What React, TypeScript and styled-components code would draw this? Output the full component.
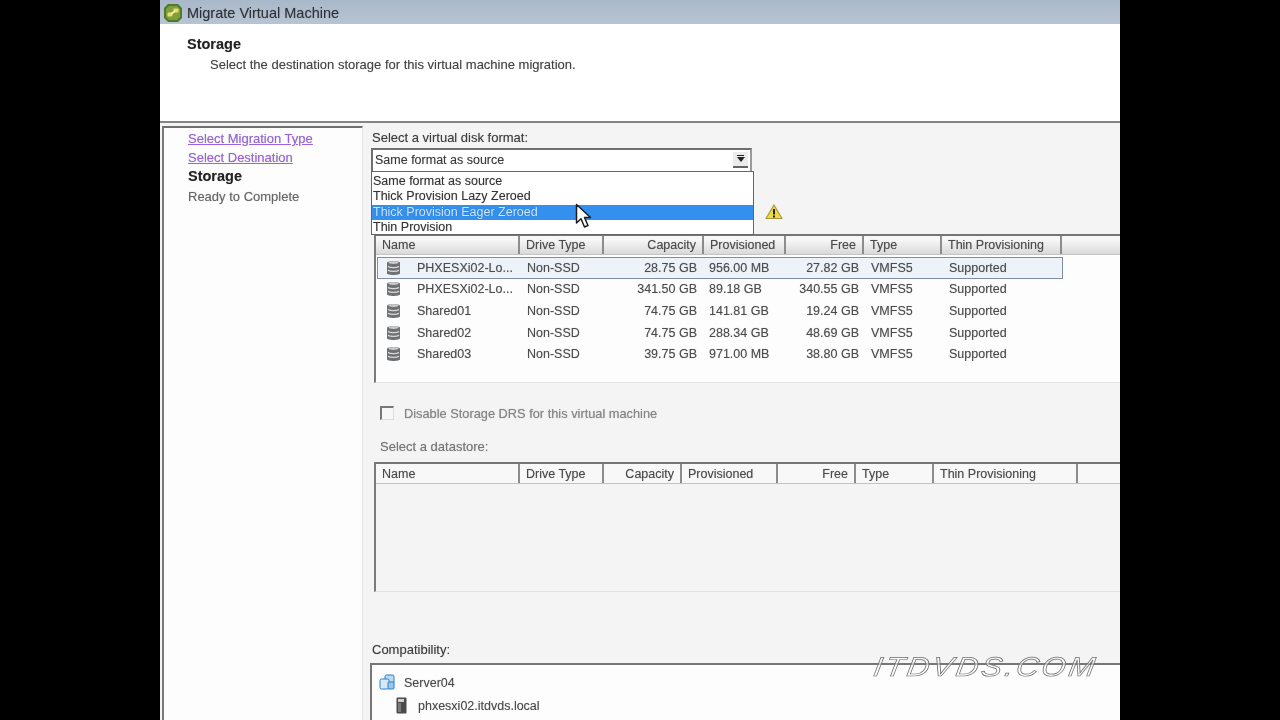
import React from "react";
import styled, { createGlobalStyle } from "styled-components";

const GlobalStyle = createGlobalStyle`
  html, body {
    margin: 0;
    padding: 0;
    height: 720px;
    overflow: hidden;
    background: #000;
  }
  * { box-sizing: border-box; }
`;

const Page = styled.div`
  width: 1280px;
  height: 720px;
  background: #000;
  display: flex;
  justify-content: center;
  overflow: hidden;
`;

const Win = styled.div`
  position: relative;
  width: 960px;
  height: 720px;
  overflow: hidden;
  display: flex;
  flex-direction: column;
  background: #fdfdfd;
  color: #3a3a3a;
  font-family: "Liberation Sans", Arial, sans-serif;
  font-size: 12.5px;
  text-shadow: 0 0 1px rgba(0, 0, 0, 0.3);
  filter: blur(0.4px);
`;

const TitleBar = styled.div`
  height: 24px;
  flex: none;
  display: flex;
  align-items: center;
  gap: 4px;
  padding: 1px 0 0 3px;
  background: linear-gradient(#a9b8c9, #b7c4d3);
  color: #2f3338;
  font-size: 14.5px;
`;

const Header = styled.div`
  height: 99px;
  flex: none;
  padding: 13px 0 0 27px;
  background: #fff;
  border-bottom: 2px solid #858585;
`;

const HeaderTitle = styled.div`
  font-weight: bold;
  font-size: 14.5px;
  color: #222;
  line-height: 15px;
`;

const HeaderText = styled.div`
  margin: 5px 0 0 23px;
  font-size: 13px;
  line-height: 15px;
  color: #444;
`;

const Body = styled.div`
  flex: 1;
  min-height: 0;
  display: flex;
  background: #f4f4f4;
`;

const Nav = styled.nav`
  flex: none;
  width: 201px;
  margin: 3px 0 0 2px;
  padding: 1px 0 0 24px;
  background: #fdfdfd;
  border-top: 2px solid #6f6f6f;
  border-left: 2px solid #7a7a7a;
  border-right: 1px solid #e4e4e4;
`;

const NavItem = styled.div<{ $kind: "link" | "current" | "todo" }>`
  height: 19.2px;
  line-height: 19px;
  font-size: ${(p) => (p.$kind === "current" ? "14.5px" : "13px")};
  font-weight: ${(p) => (p.$kind === "current" ? "bold" : "normal")};
  color: ${(p) =>
    p.$kind === "link" ? "#9a62e0" : p.$kind === "current" ? "#222" : "#666"};
  text-decoration: ${(p) => (p.$kind === "link" ? "underline" : "none")};
`;

const Main = styled.div`
  position: relative;
  flex: 1;
  min-width: 0;
  padding: 7px 0 0 9px;
  display: flex;
  flex-direction: column;
`;

const FieldLabel = styled.div`
  height: 16px;
  line-height: 16px;
  font-size: 13px;
  color: #3c3c3c;
`;

const Combo = styled.div`
  margin: 2px 0 0 -1px;
  width: 381px;
  height: 23px;
  flex: none;
  display: flex;
  align-items: center;
  justify-content: space-between;
  padding: 0 2px 2px 2px;
  background: #fff;
  border: 2px solid #707070;
  border-right-color: #9a9a9a;
  border-bottom: none;
`;

const ComboButton = styled.div`
  width: 15px;
  height: 16px;
  display: flex;
  flex-direction: column;
  align-items: center;
  justify-content: center;
  gap: 1px;
  background: #ececec;
  border-bottom: 2px solid #666;
`;

const ArrowBar = styled.span`
  width: 7px;
  height: 1px;
  background: #222;
`;

const Arrow = styled.span`
  width: 0;
  height: 0;
  border-left: 4px solid transparent;
  border-right: 4px solid transparent;
  border-top: 5px solid #222;
`;

const Dropdown = styled.div`
  position: absolute;
  left: 8px;
  top: 48px;
  width: 383px;
  height: 64px;
  z-index: 3;
  padding-top: 2px;
  background: #fff;
  border: 1px solid #666;
  color: #333;
`;

const DropItem = styled.div<{ $active?: boolean }>`
  height: 15.4px;
  line-height: 15.4px;
  padding-left: 1px;
  background: ${(p) => (p.$active ? "#3390ee" : "transparent")};
  color: ${(p) => (p.$active ? "#cfe6ff" : "#333")};
`;

const CursorMark = styled.svg`
  position: absolute;
  left: 212px;
  top: 80px;
  z-index: 4;
`;

const WarnRow = styled.div`
  height: 63px;
  flex: none;
  display: flex;
  align-items: flex-end;
  padding: 0 0 14px 393px;
`;

const TableBox = styled.div<{ $height: number; $top: number; $white?: boolean }>`
  flex: none;
  height: ${(p) => p.$height}px;
  margin: ${(p) => p.$top}px 0 0 2px;
  background: ${(p) => (p.$white ? "#fdfdfd" : "transparent")};
  border-top: 2px solid #757575;
  border-left: 2px solid #7a7a7a;
  border-bottom: 1px solid #e2e2e2;
`;

const HeadRow = styled.div<{ $cols: string; $flat?: boolean }>`
  display: grid;
  grid-template-columns: ${(p) => p.$cols};
  height: ${(p) => (p.$flat ? 20 : 19)}px;
  line-height: ${(p) => (p.$flat ? 20 : 18)}px;
  background: ${(p) =>
    p.$flat ? "#f8f8f8" : "linear-gradient(#f7f7f7 20%, #d9d9d9)"};
  border-bottom: 1px solid #c4c4c4;
`;

const HeadCell = styled.div<{ $right?: boolean }>`
  padding: 0 6px;
  text-align: ${(p) => (p.$right ? "right" : "left")};
  border-right: 2px solid #8c8c8c;
  color: #4a4a4a;
  white-space: nowrap;
  overflow: hidden;
`;

const RowList = styled.div`
  padding: 2px 57px 0 1px;
`;

const Row = styled.div<{ $cols: string; $selected?: boolean }>`
  display: grid;
  grid-template-columns: ${(p) => p.$cols};
  height: 21.6px;
  align-items: center;
  background: ${(p) => (p.$selected ? "#eef3fa" : "transparent")};
  outline: ${(p) => (p.$selected ? "1px solid #7f8ea6" : "none")};
  outline-offset: -1px;
  color: #4c4c4c;
`;

const Cell = styled.div<{ $right?: boolean }>`
  padding: 0 6px;
  text-align: ${(p) => (p.$right ? "right" : "left")};
  white-space: nowrap;
  overflow: hidden;
`;

const NameCell = styled(Cell)`
  display: flex;
  align-items: center;
  gap: 16px;
  padding-left: 9px;
  padding-right: 0;
`;

const CheckRow = styled.div`
  height: 14px;
  flex: none;
  margin: 23px 0 0 8px;
  display: flex;
  align-items: center;
  gap: 10px;
  font-size: 12.8px;
  color: #858585;
`;

const CheckBox = styled.span`
  width: 14px;
  height: 14px;
  background: #f7f7f7;
  border-top: 2px solid #777;
  border-left: 2px solid #777;
  border-right: 1px solid #ddd;
  border-bottom: 1px solid #ddd;
`;

const SectionLabel = styled.div`
  margin: 19px 0 0 8px;
  height: 16px;
  line-height: 16px;
  font-size: 13px;
  color: #777;
`;

const CompatLabel = styled.div`
  margin-top: 50px;
  height: 16px;
  line-height: 16px;
  font-size: 13px;
  color: #3c3c3c;
`;

const CompatBox = styled.div`
  flex: 1;
  margin: 5px 0 0 -2px;
  padding: 6px 0 0 7px;
  background: #fdfdfd;
  border-top: 2px solid #777;
  border-left: 2px solid #777;
`;

const TreeRow = styled.div<{ $level: number }>`
  height: 23px;
  display: flex;
  align-items: center;
  gap: ${(p) => (p.$level ? 11 : 8)}px;
  padding-left: ${(p) => p.$level * 17}px;
  color: #4a4a4a;
`;

const Watermark = styled.div`
  position: absolute;
  right: 22px;
  top: 652px;
  z-index: 5;
  font-family: "Liberation Sans", Arial, sans-serif;
  font-style: italic;
  font-size: 27px;
  letter-spacing: 2.5px;
  text-shadow: none;
  color: rgba(255, 255, 255, 0.55);
  -webkit-text-stroke: 0.7px #6e6e6e;
  transform: scaleX(1.15) skewX(-8deg);
  transform-origin: right center;
`;

const HEAD_COLS1 = "144px 84px 100px 82px 78px 78px 120px";
const ROW_COLS1 = "144px 84px 98px 84px 78px 78px 1fr";
const COLS2 = "144px 84px 78px 96px 78px 78px 144px";

const VCenterIcon = () => (
  <svg width="20" height="20" viewBox="0 0 20 20">
    <path d="M5 1H15L19 5V15L15 19H5L1 15V5Z" fill="#4f7a2c" />
    <path d="M6 3H14L17 6V14L14 17H6L3 14V6Z" fill="#7f9f3e" />
    <rect x="4.5" y="9.5" width="5" height="4" rx="1" fill="#efdc62" />
    <rect x="10.5" y="5.5" width="5" height="4" rx="1" fill="#efdc62" />
    <path d="M8 11L12 8" stroke="#f7f0b0" strokeWidth="1.6" />
  </svg>
);

const DiskIcon = () => (
  <svg width="15" height="18" viewBox="0 0 15 18">
    <path
      d="M1 3.5C1 1.8 14 1.8 14 3.5V14.5C14 16.4 1 16.4 1 14.5Z"
      fill="#6f7173"
    />
    <ellipse cx="7.5" cy="3.6" rx="5" ry="1.3" fill="#c9cbcc" />
    <path
      d="M2 7.5C4 9 11 9 13 7.5M2 11.2C4 12.7 11 12.7 13 11.2"
      stroke="#d8d9da"
      strokeWidth="1.3"
      fill="none"
    />
  </svg>
);

const WarnIcon = () => (
  <svg width="18" height="16" viewBox="0 0 18 16">
    <path
      d="M9 1L17 14.5H1Z"
      fill="#f0d93e"
      stroke="#a8993a"
      strokeWidth="1.2"
      strokeLinejoin="round"
    />
    <rect x="8" y="5" width="2" height="5.5" fill="#222" />
    <rect x="8" y="11.5" width="2" height="2" fill="#222" />
  </svg>
);

const ClusterIcon = () => (
  <svg width="17" height="17" viewBox="0 0 17 17">
    <rect x="6" y="1" width="9" height="9" rx="1.5" fill="#bcd9f2" stroke="#2f7fc4" />
    <rect x="1" y="5" width="9" height="10" rx="1.5" fill="#d6e9f8" stroke="#2f7fc4" />
    <rect x="9" y="8" width="6" height="7" rx="1" fill="#9cc7ea" stroke="#2f7fc4" />
  </svg>
);

const HostIcon = () => (
  <svg width="11" height="17" viewBox="0 0 11 17">
    <rect x="0.5" y="0.5" width="10" height="16" rx="1" fill="#4b4b4b" />
    <rect x="2" y="2" width="6" height="3" fill="#cfcfcf" />
    <rect x="2" y="6" width="3" height="9" fill="#7a7a7a" />
  </svg>
);

const rows = [
  ["PHXESXi02-Lo...", "Non-SSD", "28.75 GB", "956.00 MB", "27.82 GB", "VMFS5", "Supported"],
  ["PHXESXi02-Lo...", "Non-SSD", "341.50 GB", "89.18 GB", "340.55 GB", "VMFS5", "Supported"],
  ["Shared01", "Non-SSD", "74.75 GB", "141.81 GB", "19.24 GB", "VMFS5", "Supported"],
  ["Shared02", "Non-SSD", "74.75 GB", "288.34 GB", "48.69 GB", "VMFS5", "Supported"],
  ["Shared03", "Non-SSD", "39.75 GB", "971.00 MB", "38.80 GB", "VMFS5", "Supported"],
];

const heads = ["Name", "Drive Type", "Capacity", "Provisioned", "Free", "Type", "Thin Provisioning"];
const rightCols = [2, 4];

export default function App() {
  return (
    <Page>
      <GlobalStyle />
      <Win>
        <TitleBar>
          <VCenterIcon />
          Migrate Virtual Machine
        </TitleBar>
        <Header>
          <HeaderTitle>Storage</HeaderTitle>
          <HeaderText>Select the destination storage for this virtual machine migration.</HeaderText>
        </Header>
        <Body>
          <Nav>
            <NavItem $kind="link">Select Migration Type</NavItem>
            <NavItem $kind="link">Select Destination</NavItem>
            <NavItem $kind="current">Storage</NavItem>
            <NavItem $kind="todo">Ready to Complete</NavItem>
          </Nav>
          <Main>
            <FieldLabel>Select a virtual disk format:</FieldLabel>
            <Combo>
              Same format as source
              <ComboButton>
                <ArrowBar />
                <Arrow />
              </ComboButton>
            </Combo>
            <Dropdown>
              <DropItem>Same format as source</DropItem>
              <DropItem>Thick Provision Lazy Zeroed</DropItem>
              <DropItem $active>Thick Provision Eager Zeroed</DropItem>
              <DropItem>Thin Provision</DropItem>
            </Dropdown>
            <CursorMark width="18" height="28" viewBox="0 0 18 28">
              <path
                d="M1.5 1.5V20L6 15.8L9.5 24L13 22.5L9.5 14.5H15.5Z"
                fill="#fff"
                stroke="#1c1c1c"
                strokeWidth="1.5"
                strokeLinejoin="round"
              />
            </CursorMark>
            <WarnRow>
              <WarnIcon />
            </WarnRow>
            <TableBox $height={149} $top={0} $white>
              <HeadRow $cols={HEAD_COLS1}>
                {heads.map((h, i) => (
                  <HeadCell key={h} $right={rightCols.includes(i)}>
                    {h}
                  </HeadCell>
                ))}
              </HeadRow>
              <RowList>
                {rows.map((r, idx) => (
                  <Row key={idx} $cols={ROW_COLS1} $selected={idx === 0}>
                    <NameCell>
                      <DiskIcon />
                      {r[0]}
                    </NameCell>
                    {r.slice(1).map((v, i) => (
                      <Cell key={i} $right={rightCols.includes(i + 1)}>
                        {v}
                      </Cell>
                    ))}
                  </Row>
                ))}
              </RowList>
            </TableBox>
            <CheckRow>
              <CheckBox />
              Disable Storage DRS for this virtual machine
            </CheckRow>
            <SectionLabel>Select a datastore:</SectionLabel>
            <TableBox $height={130} $top={7}>
              <HeadRow $cols={COLS2} $flat>
                {heads.map((h, i) => (
                  <HeadCell key={h} $right={rightCols.includes(i)}>
                    {h}
                  </HeadCell>
                ))}
              </HeadRow>
            </TableBox>
            <CompatLabel>Compatibility:</CompatLabel>
            <CompatBox>
              <TreeRow $level={0}>
                <ClusterIcon />
                Server04
              </TreeRow>
              <TreeRow $level={1}>
                <HostIcon />
                phxesxi02.itdvds.local
              </TreeRow>
            </CompatBox>
          </Main>
        </Body>
        <Watermark>ITDVDS.COM</Watermark>
      </Win>
    </Page>
  );
}
